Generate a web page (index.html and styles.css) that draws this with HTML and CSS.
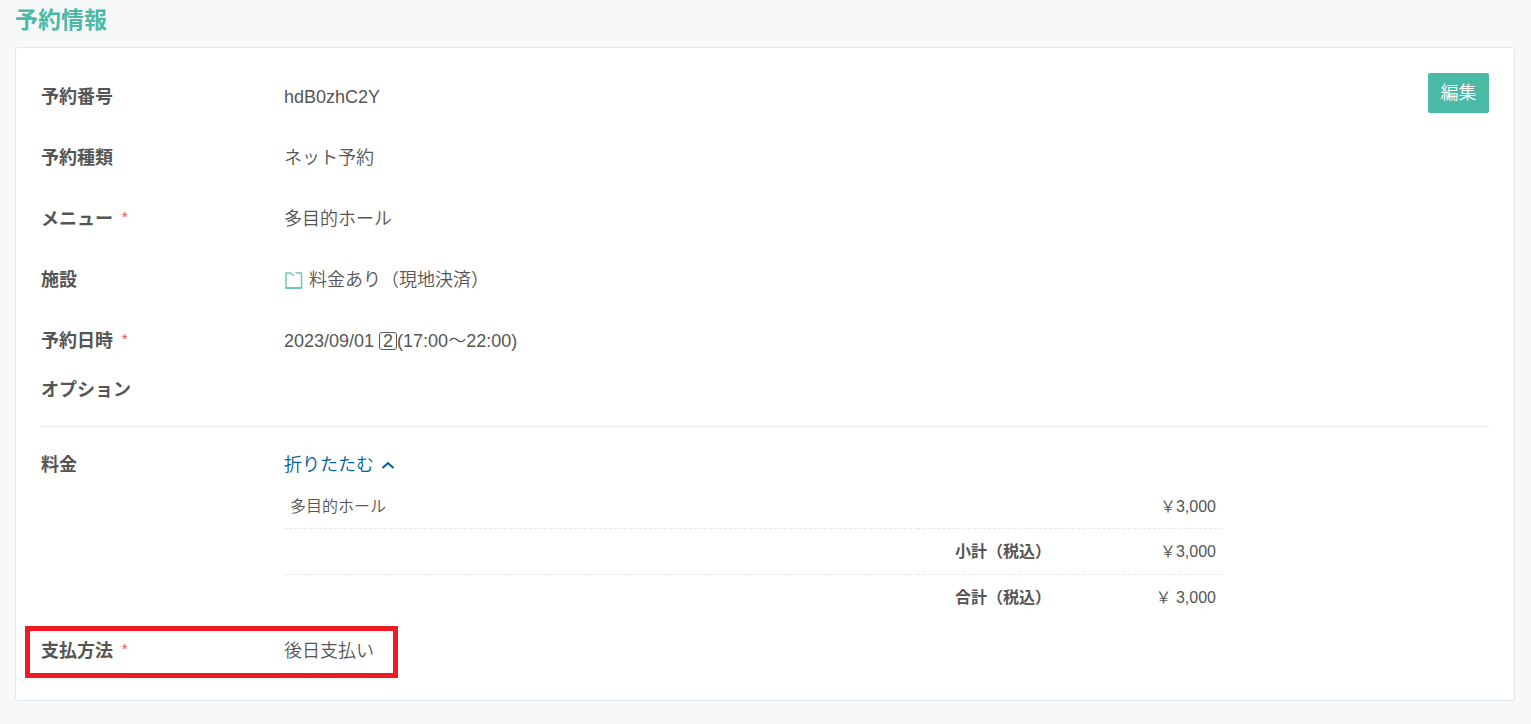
FILE: index.html
```html
<!DOCTYPE html>
<html lang="ja">
<head>
  <meta charset="UTF-8">
  <meta name="viewport" content="width=device-width, initial-scale=1.0">
  <title>予約情報</title>
  <link rel="stylesheet" href="styles.css">
</head>
<body>
  <h1 class="page-title">予約情報</h1>
  <main class="card">
    <div class="card-top">
      <dl class="info">
        <div class="row"><dt>予約番号</dt><dd>hdB0zhC2Y</dd></div>
        <div class="row"><dt>予約種類</dt><dd>ネット予約</dd></div>
        <div class="row"><dt>メニュー<span class="required">*</span></dt><dd>多目的ホール</dd></div>
        <div class="row">
          <dt>施設</dt>
          <dd class="facility">
            <svg class="icon-folder" width="19" height="18" viewBox="0 0 19 18" aria-hidden="true">
              <path d="M2 16V1H6.500L9.800 3.800M11.500 1h6v15" />
              <path class="base" d="M1.200 16h17" />
            </svg>
            料金あり（現地決済）
          </dd>
        </div>
        <div class="row"><dt>予約日時<span class="required">*</span></dt><dd>2023/09/01 <span class="slot">2</span>(17:00～22:00)</dd></div>
        <div class="row row-option"><dt>オプション</dt></div>
      </dl>
      <button type="button" class="btn-edit">編集</button>
    </div>

    <div class="row row-price">
      <div class="label">料金</div>
      <div>
        <a href="#" class="toggle">折りたたむ
          <svg width="14" height="10" viewBox="0 0 14 10" aria-hidden="true"><path d="M1.500 7L7 2l5.500 5" /></svg>
        </a>
        <table class="price">
          <tr><td class="name">多目的ホール</td><th></th><td class="amount">￥3,000</td></tr>
          <tr><td class="name"></td><th>小計（税込）</th><td class="amount">￥3,000</td></tr>
          <tr><td class="name"></td><th>合計（税込）</th><td class="amount">￥ 3,000</td></tr>
        </table>
      </div>
    </div>

    <div class="row row-payment">
      <div class="label">支払方法<span class="required">*</span></div>
      <div>後日支払い</div>
    </div>
  </main>
</body>
</html>
```
FILE: styles.css
```css
* { box-sizing: border-box; }
body {
  margin: 0;
  padding: 6px 16px 23px 15px;
  background: #f7f8fa;
  color: #555;
  font-family: "Liberation Sans", "Noto Sans CJK JP", sans-serif;
  font-size: 18px;
  font-weight: 350;
  line-height: 27px;
}
.page-title { margin: 0 0 13px; font-size: 23px; line-height: 28px; color: #4ab9a6; }
.card { padding: 18px 25px 22px; background: #fff; border: 1px solid #e3e8ec; border-radius: 3px; }
.card-top { display: flex; align-items: flex-start; padding-bottom: 22px; border-bottom: 1px solid #e5e7e9; }

.info { flex: 1; margin: 0; }
.row { display: grid; grid-template-columns: 243px 1fr; padding: 18px 0 16px; }
.row dd { margin: 0; }
.row dt, .label { font-weight: bold; }
.required { margin-left: 9px; color: #f04a3c; font-size: 14px; font-weight: normal; line-height: 14px; vertical-align: 3px; }
.facility { display: flex; align-items: center; gap: 6px; }
.icon-folder { fill: none; stroke: #6cc7b9; stroke-width: 1.5; }
.icon-folder .base { stroke-width: 2; }
.slot { display: inline-block; width: 18px; height: 18px; border: 1px solid #555; border-radius: 3px; line-height: 17px; text-align: center; }
.row-option { padding: 6px 0 0; }

.btn-edit {
  margin-top: 7px;
  width: 61px;
  height: 40px;
  padding: 0;
  border: 0;
  border-radius: 2px;
  background: #4ab9a6;
  color: #fff;
  font: inherit;
  cursor: pointer;
}

.row-price { padding: 25px 0 0; }
.toggle { color: #005f9b; text-decoration: none; }
.toggle svg { margin-left: 2px; fill: none; stroke: #005f9b; stroke-width: 2; }
.price { width: 78%; max-width: 938px; margin-top: 4px; border-collapse: collapse; table-layout: fixed; font-size: 16px; }
.price th, .price td { height: 46px; padding: 0 6px; text-align: right; }
.price tr:first-child th, .price tr:first-child td { height: 45px; padding-top: 2px; }
.price tr + tr { border-top: 1px dashed #e3e8ec; }
.price th { width: 140px; white-space: nowrap; }
.price .name { text-align: left; }
.price .amount { width: 165px; }

.row-payment {
  width: fit-content;
  margin: 6px 0 0 -16px;
  padding: 7px 19px 8px 11px;
  border: 5px solid #ed1c24;
}
```
